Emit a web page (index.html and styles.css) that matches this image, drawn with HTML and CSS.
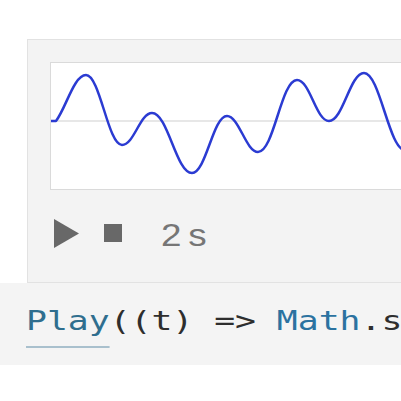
FILE: index.html
```html
<!DOCTYPE html>
<html>
<head>
<meta charset="utf-8">
<link rel="stylesheet" href="styles.css">
</head>
<body>
<div class="panel">
  <div class="chart">
    <svg class="wave" width="350" height="126" viewBox="51 63 350 126">
      <line x1="51" y1="121" x2="401" y2="121" stroke="#cfcfcf" stroke-width="1"/>
      <path d="M51,121 L56,121 C66,108 74,75 86,75 C100,75 108,145 122,145 C134,145 140,113 152,113 C168,113 176,173 192,173 C206,173 213,116 227,116 C239,116 246,152 258,152 C274,152 281,80 297,80 C310,80 316,121 329,121 C343,121 350,73 364,73 C380,73 389,150 405,150" fill="none" stroke="#2b3bd2" stroke-width="2.5" stroke-linejoin="round" stroke-linecap="round"/>
    </svg>
  </div>
  <div class="controls">
    <svg class="play" width="25" height="29" viewBox="0 0 25 29"><polygon points="0,0 25,14.5 0,29" fill="#686868"/></svg>
    <span class="stop"></span>
    <span class="dur">2 s</span>
  </div>
</div>
<div class="code"><span class="line"><span class="fn u">Play</span>((t) =&gt; <span class="fn2">Math</span>.sin(t * 440))</span></div>
</body>
</html>
```
FILE: styles.css
```css
html, body {
  margin: 0;
  padding: 0;
  background: #ffffff;
}
body {
  width: 401px;
  height: 401px;
  overflow: hidden;
}
.panel {
  box-sizing: border-box;
  margin: 39px 0 0 27px;
  height: 244px;
  border: 1px solid #e2e2e2;
  border-right: none;
  background: #f3f3f3;
  padding: 22px 0 0 22px;
}
.chart {
  box-sizing: border-box;
  height: 128px;
  border: 1px solid #dadada;
  border-right: none;
  background: #ffffff;
  overflow: hidden;
}
.wave {
  display: block;
}
.controls {
  display: flex;
  align-items: center;
  height: 44px;
  margin-top: 21px;
  padding-left: 4px;
}
.play {
  display: block;
  flex: none;
}
.stop {
  display: block;
  flex: none;
  width: 18px;
  height: 18px;
  margin-left: 25px;
  background: #686868;
}
.dur {
  display: inline-block;
  margin-left: 39px;
  padding-top: 5px;
  font-family: "Liberation Sans", Arial, sans-serif;
  font-size: 32px;
  color: #767676;
  word-spacing: -3px;
  transform: scaleX(1.15);
  transform-origin: 0 50%;
  white-space: pre;
}
.code {
  height: 82px;
  background: #f4f4f4;
  padding-left: 26px;
  font-family: "DejaVu Sans Mono", "Liberation Mono", monospace;
  font-size: 27px;
  line-height: 76px;
  color: #2e2e2e;
  white-space: pre;
  overflow: hidden;
}
.line {
  display: inline-block;
  transform: scaleX(1.286);
  transform-origin: 0 0;
}
.fn {
  color: #2f6e8e;
}
.fn2 {
  color: #2b72a0;
}
.u {
  position: relative;
}
.u::after {
  content: "";
  position: absolute;
  left: 0;
  right: 0;
  top: 41px;
  height: 2px;
  background: #a9c0cd;
}
```
